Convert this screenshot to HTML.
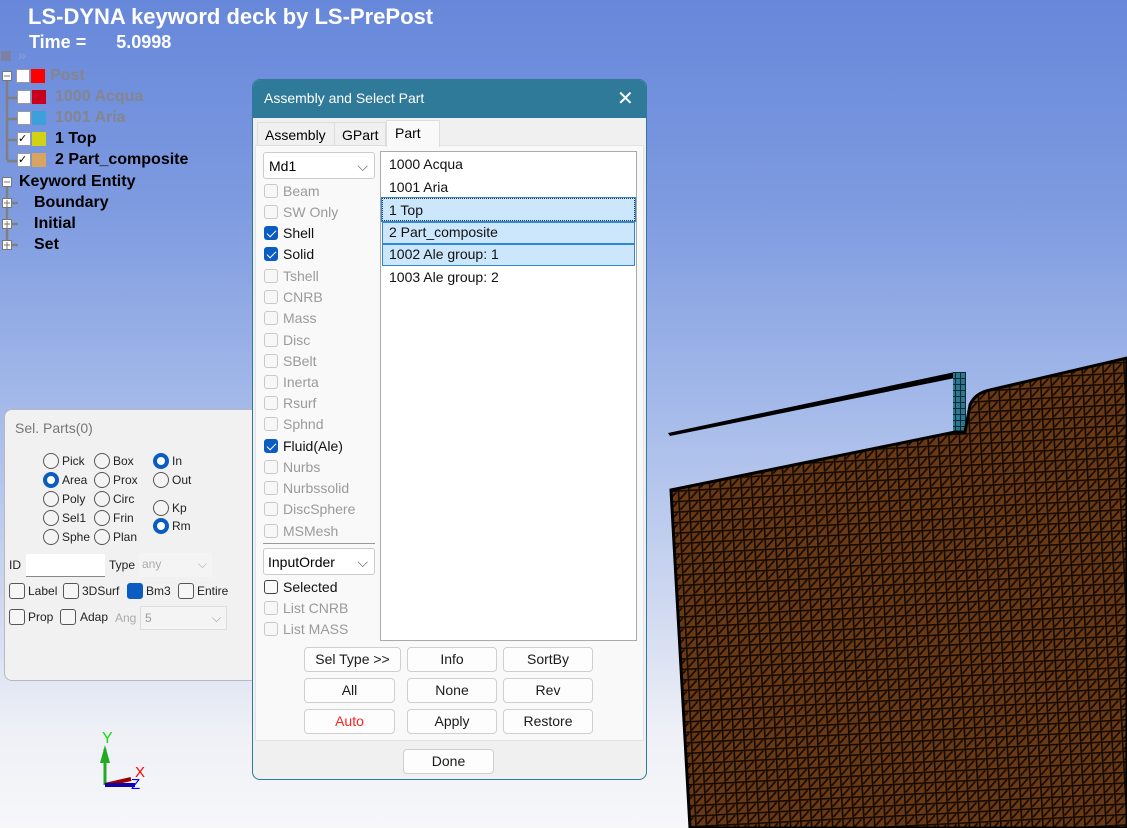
<!DOCTYPE html>
<html><head><meta charset="utf-8"><style>
*{margin:0;padding:0;box-sizing:border-box}
body{width:1127px;height:828px;overflow:hidden;position:relative;font-family:"Liberation Sans",sans-serif;background:linear-gradient(180deg,#6787da 0%,#7e9be0 25%,#a6bbea 50%,#cdd7f0 72%,#eef0f6 88%,#f7f7fa 100%)}
.a{position:absolute;white-space:nowrap}
.tr{font-weight:bold;font-size:16px}
.cb{position:absolute;width:14px;height:14px;border:1px solid #c8c8c8;border-radius:3px;background:#f7f7f7}
.cb.on{background:#0a5cc2;border-color:#0a5cc2}
.cb.on:after{content:"";position:absolute;left:4px;top:1px;width:4px;height:8px;border:solid #fff;border-width:0 1.5px 1.5px 0;transform:rotate(45deg)}
.lab{position:absolute;font-size:14px;color:#9a9a9a}
.lab.k{color:#111}
.btn{position:absolute;height:25px;border:1px solid #cfcfcf;border-radius:4px;background:#fdfdfd;font-size:14px;text-align:center;line-height:23px;color:#1a1a1a}
.rd{position:absolute;width:16px;height:16px;border:1px solid #555;border-radius:50%;background:#f4f4f4}
.rd.on{background:#fff;border:4.5px solid #0a5cc2}
.sl{position:absolute;font-size:12px;color:#222}
.scb{position:absolute;width:16px;height:16px;border:1px solid #555;border-radius:3px;background:#f6f6f6}
</style></head><body>
<div class="a" style="left:28px;top:4px;font-size:22px;font-weight:bold;color:#fff">LS-DYNA keyword deck by LS-PrePost</div>
<div class="a" style="left:29px;top:32px;font-size:18px;font-weight:bold;color:#fff">Time =&nbsp;&nbsp;&nbsp;&nbsp;&nbsp; 5.0998</div>
<div class="a" style="left:1px;top:51px;width:10px;height:10px;background:#8080a0"></div>
<div class="a" style="left:18px;top:47px;color:#8fa0d8;font-size:14px">»</div>
<svg class="a" style="left:0;top:65px" width="40" height="200"><g stroke="#808080" stroke-width="2.5" fill="none"><path d="M7 12V95M7 33H18M7 54H18M7 75H18M7 96H18M7 118V180M7 138H18M7 159H18M7 180H18"/></g>
<g fill="#fff" stroke="#777"><rect x="2.5" y="6.5" width="9" height="9"/><rect x="2.5" y="112.5" width="9" height="9"/><rect x="2.5" y="133.5" width="9" height="9"/><rect x="2.5" y="154.5" width="9" height="9"/><rect x="2.5" y="175.5" width="9" height="9"/></g>
<g stroke="#777"><path d="M4 11H10M4 117H10M4 138H10M7 135V142M4 159H10M7 156V163M4 180H10M7 177V184"/></g></svg>
<div class="a" style="left:16px;top:69px;width:14px;height:14px;background:#fff;border:1px solid #999"></div><div class="a" style="left:31px;top:69px;width:14px;height:14px;background:#f00"></div>
<div class="a tr" style="left:50px;top:67px;color:#85858f">Post</div>
<div class="a" style="left:17px;top:90px;width:14px;height:14px;background:#fff;border:1px solid #999"></div><div class="a" style="left:32px;top:90px;width:14px;height:14px;background:#c8001e"></div>
<div class="a tr" style="left:55px;top:88px;color:#85858f">1000 Acqua</div>
<div class="a" style="left:17px;top:111px;width:14px;height:14px;background:#fff;border:1px solid #999"></div><div class="a" style="left:32px;top:111px;width:14px;height:14px;background:#3ca0dc"></div>
<div class="a tr" style="left:55px;top:109px;color:#85858f">1001 Aria</div>
<div class="a" style="left:17px;top:132px;width:14px;height:14px;background:#fff;border:1px solid #999;font-size:11px;line-height:12px">✓</div><div class="a" style="left:32px;top:132px;width:14px;height:14px;background:#d2d214"></div>
<div class="a tr" style="left:55px;top:130px;color:#000">1 Top</div>
<div class="a" style="left:17px;top:153px;width:14px;height:14px;background:#fff;border:1px solid #999;font-size:11px;line-height:12px">✓</div><div class="a" style="left:32px;top:153px;width:14px;height:14px;background:#d8a460"></div>
<div class="a tr" style="left:55px;top:151px;color:#000">2 Part_composite</div>
<div class="a tr" style="left:19px;top:173px;color:#000">Keyword Entity</div>
<div class="a tr" style="left:34px;top:194px;color:#000">Boundary</div>
<div class="a tr" style="left:34px;top:215px;color:#000">Initial</div>
<div class="a tr" style="left:34px;top:236px;color:#000">Set</div>
<svg class="a" style="left:0;top:0" width="1127" height="828">
<defs><pattern id="m" width="10.5" height="10.5" patternUnits="userSpaceOnUse" patternTransform="rotate(-3)"><rect width="10.5" height="10.5" fill="#6a3a14"/><path d="M0 0.8H10.5M0.8 0V10.5M2 9L9 2" stroke="#160a02" stroke-width="1.7"/></pattern>
<pattern id="b" width="5" height="6" patternUnits="userSpaceOnUse"><rect width="5" height="6" fill="#2d7890"/><path d="M0 0.5H5M0.5 0V6" stroke="#0d2a33"/></pattern></defs>
<path d="M668 433L955 372L955 378L670 436Z" fill="#000"/>
<rect x="953" y="372" width="13" height="62" fill="url(#b)"/>
<path d="M671 490L955 432L965 432L970 405Q975 393 990 390L1127 358V828H690Z" fill="url(#m)" stroke="#000" stroke-width="3"/>
</svg>
<svg class="a" style="left:95px;top:725px" width="60" height="65"><text x="7" y="18" fill="#1d1" font-size="16" font-family="Liberation Sans">Y</text><path d="M10 24V60" stroke="#2a2" stroke-width="3"/><path d="M5 38L10 20L15 38Z" fill="#2a2"/><path d="M10 60L36 54" stroke="#900" stroke-width="4"/><path d="M10 60L40 60" stroke="#10a" stroke-width="4"/><text x="40" y="52" fill="#f00" font-size="15">X</text><text x="36" y="64" fill="#00f" font-size="15">Z</text></svg>
<div class="a" style="left:4px;top:409px;width:260px;height:272px;background:#f1f1f1;border:1px solid #b8b8c0;border-radius:8px"></div>
<div class="a" style="left:15px;top:420px;font-size:14px;color:#777">Sel. Parts(0)</div>
<div class="rd" style="left:43px;top:453px"></div><div class="sl" style="left:62px;top:454px">Pick</div>
<div class="rd on" style="left:43px;top:472px"></div><div class="sl" style="left:62px;top:473px">Area</div>
<div class="rd" style="left:43px;top:491px"></div><div class="sl" style="left:62px;top:492px">Poly</div>
<div class="rd" style="left:43px;top:510px"></div><div class="sl" style="left:62px;top:511px">Sel1</div>
<div class="rd" style="left:43px;top:529px"></div><div class="sl" style="left:62px;top:530px">Sphe</div>
<div class="rd" style="left:94px;top:453px"></div><div class="sl" style="left:113px;top:454px">Box</div>
<div class="rd" style="left:94px;top:472px"></div><div class="sl" style="left:113px;top:473px">Prox</div>
<div class="rd" style="left:94px;top:491px"></div><div class="sl" style="left:113px;top:492px">Circ</div>
<div class="rd" style="left:94px;top:510px"></div><div class="sl" style="left:113px;top:511px">Frin</div>
<div class="rd" style="left:94px;top:529px"></div><div class="sl" style="left:113px;top:530px">Plan</div>
<div class="rd on" style="left:153px;top:453px"></div><div class="sl" style="left:172px;top:454px">In</div>
<div class="rd" style="left:153px;top:472px"></div><div class="sl" style="left:172px;top:473px">Out</div>
<div class="rd" style="left:153px;top:500px"></div><div class="sl" style="left:172px;top:501px">Kp</div>
<div class="rd on" style="left:153px;top:518px"></div><div class="sl" style="left:172px;top:519px">Rm</div>
<div class="sl" style="left:9px;top:558px">ID</div>
<div class="a" style="left:26px;top:554px;width:79px;height:23px;background:#fff;border-bottom:1px solid #888"></div>
<div class="sl" style="left:109px;top:558px">Type</div>
<div class="a" style="left:139px;top:553px;width:73px;height:24px;background:#f4f4f4;font-size:12px;color:#aaa;padding:4px 3px">any<span style="position:absolute;right:5px">⌵</span></div>
<div class="scb" style="left:9px;top:583px"></div><div class="sl" style="left:28px;top:584px">Label</div>
<div class="scb" style="left:63px;top:583px"></div><div class="sl" style="left:82px;top:584px">3DSurf</div>
<div class="scb" style="left:127px;top:583px;background:#0a5cc2;border-color:#0a5cc2"></div><div class="sl" style="left:146px;top:584px">Bm3</div>
<div class="scb" style="left:178px;top:583px"></div><div class="sl" style="left:197px;top:584px">Entire</div>
<div class="scb" style="left:9px;top:609px"></div><div class="sl" style="left:28px;top:610px">Prop</div>
<div class="scb" style="left:60px;top:609px"></div><div class="sl" style="left:80px;top:610px">Adap</div>
<div class="sl" style="left:115px;top:611px;color:#aaa">Ang</div>
<div class="a" style="left:140px;top:606px;width:87px;height:24px;background:#f4f4f4;border:1px solid #ddd;font-size:12px;color:#999;padding:4px 4px">5<span style="position:absolute;right:5px">⌵</span></div>
<div class="a" style="left:252px;top:79px;width:395px;height:701px;background:#f0f0f0;border:1px solid #2e7a98;border-radius:8px;overflow:hidden">
<div style="position:absolute;left:0;top:0;width:100%;height:38px;background:#2e7a98"></div>
</div>
<div class="a" style="left:264px;top:90px;font-size:14px;color:#fff">Assembly and Select Part</div>
<div class="a" style="left:617px;top:86px;font-size:20px;color:#fff">✕</div>
<div class="a" style="left:255px;top:145px;width:389px;height:596px;background:#f9f9f9;border:1px solid #e4e4e4"></div>
<div class="a" style="left:257px;top:122px;width:80px;height:24px;background:#f0f0f0;border:1px solid #ddd;font-size:14px;padding:4px 7px">Assembly</div>
<div class="a" style="left:334px;top:122px;width:52px;height:24px;background:#f0f0f0;border:1px solid #ddd;font-size:14px;padding:4px 7px">GPart</div>
<div class="a" style="left:386px;top:120px;width:54px;height:27px;background:#f9f9f9;border:1px solid #ddd;border-bottom:none;font-size:14px;padding:4px 8px">Part</div>
<div class="a" style="left:263px;top:152px;width:112px;height:27px;background:#fff;border:1px solid #ccc;border-radius:3px;font-size:14px;padding:5px 5px">Md1<span style="position:absolute;right:6px;color:#666">⌵</span></div>
<div class="cb" style="left:264px;top:184px"></div><div class="lab" style="left:283px;top:183px">Beam</div>
<div class="cb" style="left:264px;top:205px"></div><div class="lab" style="left:283px;top:204px">SW Only</div>
<div class="cb on" style="left:264px;top:226px"></div><div class="lab k" style="left:283px;top:225px">Shell</div>
<div class="cb on" style="left:264px;top:247px"></div><div class="lab k" style="left:283px;top:246px">Solid</div>
<div class="cb" style="left:264px;top:269px"></div><div class="lab" style="left:283px;top:268px">Tshell</div>
<div class="cb" style="left:264px;top:290px"></div><div class="lab" style="left:283px;top:289px">CNRB</div>
<div class="cb" style="left:264px;top:311px"></div><div class="lab" style="left:283px;top:310px">Mass</div>
<div class="cb" style="left:264px;top:333px"></div><div class="lab" style="left:283px;top:332px">Disc</div>
<div class="cb" style="left:264px;top:354px"></div><div class="lab" style="left:283px;top:353px">SBelt</div>
<div class="cb" style="left:264px;top:375px"></div><div class="lab" style="left:283px;top:374px">Inerta</div>
<div class="cb" style="left:264px;top:396px"></div><div class="lab" style="left:283px;top:395px">Rsurf</div>
<div class="cb" style="left:264px;top:417px"></div><div class="lab" style="left:283px;top:416px">Sphnd</div>
<div class="cb on" style="left:264px;top:439px"></div><div class="lab k" style="left:283px;top:438px">Fluid(Ale)</div>
<div class="cb" style="left:264px;top:460px"></div><div class="lab" style="left:283px;top:459px">Nurbs</div>
<div class="cb" style="left:264px;top:481px"></div><div class="lab" style="left:283px;top:480px">Nurbssolid</div>
<div class="cb" style="left:264px;top:502px"></div><div class="lab" style="left:283px;top:501px">DiscSphere</div>
<div class="cb" style="left:264px;top:524px"></div><div class="lab" style="left:283px;top:523px">MSMesh</div>
<div class="a" style="left:263px;top:543px;width:112px;height:1px;background:#999"></div>
<div class="a" style="left:263px;top:548px;width:112px;height:27px;background:#fff;border:1px solid #ccc;border-radius:3px;font-size:14px;padding:5px 4px">InputOrder<span style="position:absolute;right:6px;color:#666">⌵</span></div>
<div class="cb" style="left:264px;top:580px;border-color:#444;background:#fafafa"></div><div class="lab k" style="left:283px;top:579px">Selected</div>
<div class="cb" style="left:264px;top:601px"></div><div class="lab" style="left:283px;top:600px">List CNRB</div>
<div class="cb" style="left:264px;top:622px"></div><div class="lab" style="left:283px;top:621px">List MASS</div>
<div class="a" style="left:380px;top:151px;width:257px;height:490px;background:#fff;border:1px solid #aaa"></div>
<div class="a" style="left:382px;top:198px;width:253px;height:68px;background:#cce6fb"></div>
<div class="a" style="left:382px;top:198px;width:253px;height:23px;border:1px dotted #333;outline:1px solid #2f87d8"></div>
<div class="a" style="left:382px;top:222px;width:253px;height:22px;border:1px solid #2f87d8"></div>
<div class="a" style="left:382px;top:244px;width:253px;height:22px;border:1px solid #2f87d8"></div>
<div class="a" style="left:389px;top:156px;font-size:14px;color:#111">1000 Acqua</div>
<div class="a" style="left:389px;top:179px;font-size:14px;color:#111">1001 Aria</div>
<div class="a" style="left:389px;top:202px;font-size:14px;color:#111">1 Top</div>
<div class="a" style="left:389px;top:224px;font-size:14px;color:#111">2 Part_composite</div>
<div class="a" style="left:389px;top:246px;font-size:14px;color:#111">1002 Ale group: 1</div>
<div class="a" style="left:389px;top:269px;font-size:14px;color:#111">1003 Ale group: 2</div>
<div class="btn" style="left:304px;top:647px;width:97px">Sel Type &gt;&gt;</div>
<div class="btn" style="left:407px;top:647px;width:90px">Info</div>
<div class="btn" style="left:503px;top:647px;width:90px">SortBy</div>
<div class="btn" style="left:304px;top:678px;width:91px">All</div>
<div class="btn" style="left:407px;top:678px;width:90px">None</div>
<div class="btn" style="left:503px;top:678px;width:90px">Rev</div>
<div class="btn" style="left:304px;top:709px;width:91px;color:#f22">Auto</div>
<div class="btn" style="left:407px;top:709px;width:90px">Apply</div>
<div class="btn" style="left:503px;top:709px;width:90px">Restore</div>
<div class="btn" style="left:403px;top:749px;width:91px">Done</div>
</body></html>
